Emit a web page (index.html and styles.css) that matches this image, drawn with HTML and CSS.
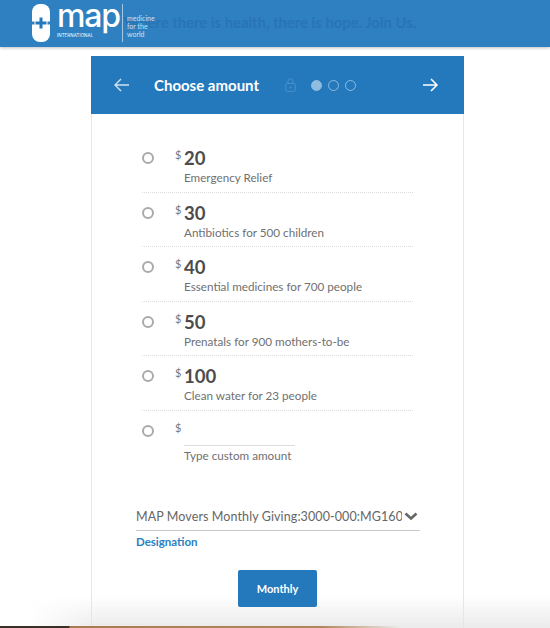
FILE: index.html
```html
<!DOCTYPE html>
<html lang="en">
<head>
<meta charset="utf-8">
<title>MAP International</title>
<link rel="stylesheet" href="styles.css">
</head>
<body>
<header class="topbar">
  <p class="slogan">Where there is health, there is hope. Join Us.</p>
  <div class="logo">
    <svg class="logo-pill" width="18" height="38" viewBox="0 0 18 38">
      <rect width="18" height="38" rx="8" fill="#fff"/>
      <path d="M0 17.500h2.500v3H0zM15.500 17.500H18v3h-2.500z" fill="#2e80c0"/>
      <path d="M7.500 13.500h3V17.500h4v3h-4v4h-3v-4h-4v-3h4z" fill="#2479bc"/>
    </svg>
    <div class="logo-word">
      <span class="logo-map">map</span>
      <span class="logo-intl">INTERNATIONAL</span>
    </div>
    <div class="logo-tag">medicine<br>for the<br>world</div>
  </div>
</header>

<main class="card">
  <div class="card-head">
    <svg class="arrow arrow-back" width="18" height="16" viewBox="0 0 18 16"><path d="M16 8H2M8 2 2 8l6 6" fill="none" stroke="#cfe2f1" stroke-width="1.4"/></svg>
    <h1 class="card-title">Choose amount</h1>
    <svg class="lock" width="11" height="14" viewBox="0 0 11 14"><rect x=".7" y="5.500" width="9.600" height="7.800" rx="1" fill="none" stroke="#4a91c9"/><path d="M3 5.500V3.200a2.500 2.500 0 0 1 5 0v2.300" fill="none" stroke="#4a91c9"/><circle cx="5.500" cy="9.400" r="1" fill="#4a91c9"/></svg>
    <div class="steps">
      <span class="step step-on"></span>
      <span class="step"></span>
      <span class="step"></span>
    </div>
    <svg class="arrow arrow-next" width="18" height="16" viewBox="0 0 18 16"><path d="M2 8h14M10 2l6 6-6 6" fill="none" stroke="#fff" stroke-width="1.5"/></svg>
  </div>

  <div class="amounts">
    <div class="amount">
      <span class="radio"></span>
      <div class="amount-body">
        <div class="price"><span class="cur">$</span><span class="val">20</span></div>
        <div class="desc">Emergency Relief</div>
      </div>
    </div>
    <div class="amount">
      <span class="radio"></span>
      <div class="amount-body">
        <div class="price"><span class="cur">$</span><span class="val">30</span></div>
        <div class="desc">Antibiotics for 500 children</div>
      </div>
    </div>
    <div class="amount">
      <span class="radio"></span>
      <div class="amount-body">
        <div class="price"><span class="cur">$</span><span class="val">40</span></div>
        <div class="desc">Essential medicines for 700 people</div>
      </div>
    </div>
    <div class="amount">
      <span class="radio"></span>
      <div class="amount-body">
        <div class="price"><span class="cur">$</span><span class="val">50</span></div>
        <div class="desc">Prenatals for 900 mothers-to-be</div>
      </div>
    </div>
    <div class="amount">
      <span class="radio"></span>
      <div class="amount-body">
        <div class="price"><span class="cur">$</span><span class="val">100</span></div>
        <div class="desc">Clean water for 23 people</div>
      </div>
    </div>
    <div class="amount amount-custom">
      <span class="radio"></span>
      <div class="amount-body">
        <div class="price price-custom"><span class="cur">$</span></div>
        <div class="custom-line"></div>
        <div class="desc">Type custom amount</div>
      </div>
    </div>
  </div>

  <div class="designation">
    <div class="select">
      <span class="select-text">MAP Movers Monthly Giving:3000-000:MG1600</span>
      <svg class="chev" width="14" height="9" viewBox="0 0 14 9"><path d="M1.500 1.500 7 6.500l5.500-5" fill="none" stroke="#666" stroke-width="2.600"/></svg>
    </div>
    <div class="select-label">Designation</div>
  </div>

  <div class="actions"><button class="btn" type="button">Monthly</button></div>
</main>

<div class="bottom-fade"></div>
<div class="bottom-strip"></div>
</body>
</html>
```

FILE: styles.css
```css
* { box-sizing: border-box; }
html, body { margin: 0; height: 628px; overflow: hidden; }
body {
  position: relative;
  background: #fff;
  font-family: "Lato", "Noto Sans", sans-serif;
  color: #666;
}
.topbar {
  position: relative;
  height: 47px;
  background: #2e80c0;
  box-shadow: 0 1px 3px rgba(0,0,0,.25);
  display: flex;
  align-items: center;
  justify-content: center;
}
.slogan {
  margin: 0 10px 3px 0;
  font-size: 14.8px;
  font-weight: 700;
  color: #2874b4;
  white-space: nowrap;
}
.logo {
  position: absolute;
  left: 32px;
  top: 4px;
  display: flex;
  color: #fff;
}
.logo-word {
  position: relative;
  width: 73px;
  height: 38px;
  border-right: 1px solid #a5c9e4;
}
.logo-map {
  position: absolute;
  left: 7px;
  top: -10px;
  font-family: "Inter", sans-serif;
  font-size: 32px;
  font-weight: 500;
  letter-spacing: -1.2px;
  line-height: 44px;
}
.logo-intl {
  position: absolute;
  left: 7px;
  top: 28.5px;
  font-family: "Inter", sans-serif;
  font-size: 4.4px;
  line-height: 6px;
  letter-spacing: .1px;
}
.logo-tag {
  margin: 10px 0 0 4px;
  font-size: 7px;
  line-height: 8px;
  color: #cfe2f1;
}
.card {
  position: relative;
  z-index: 1;
  width: 373px;
  height: 580px;
  margin: 9px 0 0 91px;
  border: 1px solid #e6e6e6;
  border-top: 0;
}
.card-head {
  height: 58px;
  margin: 0 -1px;
  background: #2479bc;
  display: flex;
  align-items: center;
  color: #fff;
}
.arrow-back { margin-left: 22px; }
.card-title {
  margin: 0 0 1px 23px;
  width: 125px;
  font-size: 15px;
  font-weight: 700;
  letter-spacing: 0;
  white-space: nowrap;
}
.lock { margin-left: 6px; }
.steps { display: flex; gap: 6px; margin-left: 15px; }
.step {
  width: 11px;
  height: 11px;
  border-radius: 50%;
  border: 1px solid #8fbcdf;
}
.step-on { background: #8fbcdf; }
.arrow-next { margin-left: auto; margin-right: 25px; }
.amounts { padding: 24px 50px 0; }
.amount {
  display: flex;
  height: 54.5px;
  border-bottom: 1px dotted #ddd;
}
.amount-custom { border-bottom: 0; height: 72px; }
.radio {
  width: 12px;
  height: 12px;
  margin-top: 14px;
  border-radius: 50%;
  border: 2px solid #aaa;
  flex: none;
}
.amount-body { margin-left: 21px; flex: 1; }
.price { display: flex; height: 30px; padding-top: 11px; }
.cur { font-size: 11px; line-height: 12px; width: 9px; color: #777; }
.val {
  margin-top: -1px;
  font-size: 18.5px;
  line-height: 20px;
  font-weight: 700;
  color: #4c4c4c;
}
.desc {
  margin: 1px 0 0 9px;
  font-size: 11.7px;
  line-height: 16px;
  color: #707070;
  white-space: nowrap;
}
.price-custom { height: 34px; }
.custom-line { width: 111px; height: 1px; margin-left: 9px; background: #ddd; }
.designation { margin: 20px 43px 0 44px; }
.select {
  display: flex;
  align-items: center;
  height: 28px;
  border-bottom: 1px solid #c8c8c8;
}
.select-text {
  width: 266px;
  overflow: hidden;
  white-space: nowrap;
  font-size: 12.5px;
  letter-spacing: .1px;
  color: #666;
}
.chev { margin-left: 2px; }
.select-label {
  margin-top: 3px;
  font-size: 11.5px;
  font-weight: 700;
  line-height: 16px;
  color: #2b80c2;
}
.actions { display: flex; justify-content: center; margin-top: 20px; }
.btn {
  width: 79px;
  height: 37px;
  background: #2479bc;
  border: 0;
  border-radius: 2px;
  color: #fff;
  font: 700 11px "Lato", sans-serif;
}
.bottom-fade {
  position: absolute;
  left: 0;
  right: 0;
  bottom: 0;
  height: 32px;
  background: linear-gradient(to bottom, rgba(232,232,232,0), rgba(232,232,232,.9));
  -webkit-mask-image: linear-gradient(to right, transparent 5%, #000 18%);
  mask-image: linear-gradient(to right, transparent 5%, #000 18%);
}
.bottom-strip {
  position: absolute;
  z-index: 2;
  left: 0;
  bottom: 0;
  width: 400px;
  height: 2px;
  background: linear-gradient(to right, #3a3026 0, #3a3026 69px, #a87c4e 70px, #b08658 80%, rgba(225,205,185,0) 100%);
}
```
